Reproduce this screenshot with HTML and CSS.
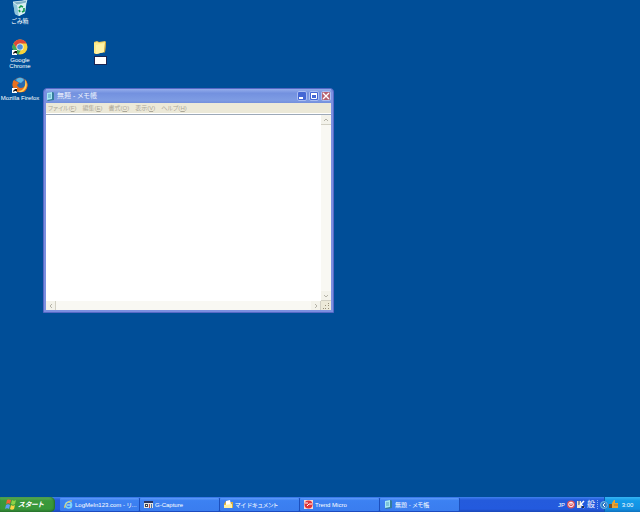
FILE: index.html
```html
<!DOCTYPE html>
<html lang="ja">
  <head>
    <meta charset="UTF-8">
    <meta name="viewport" content="width=device-width, initial-scale=1">
    <title>デスクトップ</title>
    <link rel="stylesheet" href="styles.css">
  </head>
  <body>
    <main class="desktop">
      <a class="shortcut trash" href="#">
        <svg width="16" height="16" viewBox="0 0 16 16">
          <path d="M1 2 10 1l5-1-2 13-6 3-4-2z" fill="#b9e0ea"/>
          <path d="m1 3 4 2 2 11-4-2z" fill="#8fc6dc"/>
          <path d="m5 4 9-2-1 11-6 3z" fill="#d8eef0"/>
          <path d="m1 2 9-1 5-1-1 3-9 2z" fill="#7fb0c4" stroke="#eefcff" stroke-width=".6"/>
          <path d="m7 8 2-2 2 1M12 8v3l-2 1M8 12l-1-2" fill="none" stroke="#159a50" stroke-width="1.7"/>
        </svg>
        <span>ごみ箱</span>
      </a>
      <a class="shortcut chrome" href="#">
        <svg width="16" height="16" viewBox="0 0 16 16">
          <circle cx="8" cy="8" r="7.5" fill="#f7d33c"/>
          <path d="M1.5 4.2A7.5 7.5 0 0 1 14.7 4.5H8L5 10z" fill="#df4939"/>
          <path d="M1.5 4.2 5 10l4 1-2.5 4.3A7.5 7.5 0 0 1 1.5 4.2z" fill="#3fa958"/>
          <circle cx="8" cy="8" r="3.6" fill="#f5f5ed"/>
          <circle cx="8" cy="8" r="2.8" fill="#4b8fdd"/>
          <path d="M0 11h5v5H0z" fill="#fff"/>
          <path d="M1 15c0-2 1-2 2-2l-1-1h3v3l-1-1c-1 0-2 0-3 1z" fill="#111"/>
        </svg>
        <span>Google<br>Chrome</span>
      </a>
      <a class="shortcut firefox" href="#">
        <svg width="16" height="16" viewBox="0 0 16 16">
          <circle cx="8" cy="8" r="7.5" fill="#e8691c"/>
          <circle cx="8" cy="6.5" r="6" fill="#2569b0"/>
          <path d="M4 3c2-3 6-3 8 0l-3 3-3-1z" fill="#5cb8e6"/>
          <path d="M1 4c1-1 1-1 2 0 2 0 3 1 4 2L5 8c1 3 4 4 7 2 2-2 2-5 1-8 4 4 3 10-1 13H5C1 13 0 8 1 4z" fill="#e9701f"/>
          <path d="M13 3c3 4 2 9-3 12-2 0-3 0-4-1 6 0 8-5 7-11z" fill="#ffd45a"/>
          <path d="M0 11h5v5H0z" fill="#fff"/>
          <path d="M1 15c0-2 1-2 2-2l-1-1h3v3l-1-1c-1 0-2 0-3 1z" fill="#111"/>
        </svg>
        <span>Mozilla Firefox</span>
      </a>
      <div class="shortcut folder">
        <svg width="14" height="14" viewBox="0 0 14 14">
          <path d="m1 2 3-1 2 1 6-1 1 1-1 10-9 2-2-1z" fill="#e8c75a"/>
          <path d="m1 3 3-1 2 1 6-1-1 10-8 2-2-1z" fill="#fdeb8c"/>
          <path d="m3 5 9-2-1 9-8 2z" fill="#fff3a6"/>
          <path d="m12 2 1 1-1 9-1 1z" fill="#c9a23c"/>
        </svg>
        <input class="rename" type="text" aria-label="フォルダ名">
      </div>

      <section class="window">
        <header class="title-bar">
          <svg width="9" height="9" viewBox="0 0 9 9">
            <path d="m2 1 5-1 1 1v7l-6 1-1-1z" fill="#347d9b"/>
            <path d="m1 1 5-1v7l-5 1z" fill="#a6e8f3"/>
            <path d="M2 3h3M2 5h3" stroke="#559fc2"/>
          </svg>
          <h1>無題 - メモ帳</h1>
          <button class="caption" aria-label="最小化"><svg width="8" height="8" viewBox="0 0 8 8"><path d="M1 6h4" stroke="#fff" stroke-width="2"/></svg></button>
          <button class="caption" aria-label="最大化"><svg width="8" height="8" viewBox="0 0 8 8"><path d="M1.5 2v4.5h5V2" fill="none" stroke="#fff"/><path d="M1 2h6" stroke="#fff" stroke-width="2"/></svg></button>
          <button class="caption close" aria-label="閉じる"><svg width="8" height="8" viewBox="0 0 8 8"><path d="m1 1 6 6M7 1 1 7" stroke="#fff" stroke-width="1.4"/></svg></button>
        </header>
        <nav class="menu">
          <button>ファイル(<u>F</u>)</button>
          <button>編集(<u>E</u>)</button>
          <button>書式(<u>O</u>)</button>
          <button>表示(<u>V</u>)</button>
          <button>ヘルプ(<u>H</u>)</button>
        </nav>
        <div class="editor">
          <textarea aria-label="本文" spellcheck="false"></textarea>
          <div class="scroll vertical">
            <button aria-label="上へ"><svg width="8" height="8" viewBox="0 0 8 8"><path d="m2 5 2-2 2 2"/></svg></button>
            <button aria-label="下へ"><svg width="8" height="8" viewBox="0 0 8 8"><path d="m2 3 2 2 2-2"/></svg></button>
          </div>
          <div class="scroll horizontal">
            <button aria-label="左へ"><svg width="8" height="8" viewBox="0 0 8 8"><path d="M5 2 3 4l2 2"/></svg></button>
            <button aria-label="右へ"><svg width="8" height="8" viewBox="0 0 8 8"><path d="m3 2 2 2-2 2"/></svg></button>
          </div>
          <svg class="grip" width="10" height="9" viewBox="0 0 10 9">
            <path d="M7 2h1v1H7zM4 4h1v1H4zM7 4h1v1H7zM2 7h1v1H2zM4 7h1v1H4zM7 7h1v1H7z" fill="#99917c"/>
          </svg>
        </div>
      </section>
    </main>

    <footer class="taskbar">
      <button class="start">
        <svg width="12" height="11" viewBox="0 0 12 11">
          <path d="M2 1c2-1 3 0 4 0L5 5C4 4 3 4 1 5z" fill="#f26435"/>
          <path d="M7 1c1 1 3 1 4 0l-1 4c-1 1-3 1-4 0z" fill="#8bd447"/>
          <path d="M1 6c1-1 3-1 4 0l-1 4c-1-1-3-1-4 0z" fill="#5e9cf5"/>
          <path d="M6 6c1 1 3 1 4 0l-1 4c-1 1-3 1-4 0z" fill="#fbd542"/>
        </svg>
        スタート
      </button>
      <div class="tasks">
        <button class="task">
          <svg width="9" height="9" viewBox="0 0 9 9"><circle cx="4.5" cy="5" r="3" fill="none" stroke="#78d4fb" stroke-width="1.7"/><path d="M3 5h4" stroke="#c4f1ff"/><path d="M1 8C-1 6 5 0 8 1" fill="none" stroke="#ffd14f"/></svg>
          <span>LogMeIn123.com - リ...</span>
        </button>
        <button class="task">
          <svg width="9" height="9" viewBox="0 0 9 9"><path d="M0 1h9v7H0z" fill="#e6e6df"/><path d="M0 1h9v2H0z" fill="#273463"/><path d="M1 4h3v3H1z" fill="#3c4250"/><path d="M5 4h1v4H5z" fill="#b94f4e"/><path d="M7 4h1v4H7z" fill="#4970a8"/><path d="M2 5h1v1H2z" fill="#fff"/></svg>
          <span>G-Capture</span>
        </button>
        <button class="task">
          <svg width="9" height="9" viewBox="0 0 9 9"><path d="M0 4 2 1h2l1 1h4v6H0z" fill="#d9ae43"/><path d="m2 1 4-1 1 5-5 1z" fill="#fff"/><path d="m0 5 8-1v4H0z" fill="#fff1a4"/></svg>
          <span>マイ ドキュメント</span>
        </button>
        <button class="task">
          <svg width="9" height="9" viewBox="0 0 9 9"><path d="M0 0h9v9H0z" fill="#f6d8d5"/><circle cx="4.5" cy="4.5" r="4" fill="#df343b"/><path d="M1 3h3M5 4h3M3 6l2-2" stroke="#fff"/></svg>
          <span>Trend Micro</span>
        </button>
        <button class="task">
          <svg width="9" height="9" viewBox="0 0 9 9"><path d="m2 1 5-1 1 1v7l-6 1-1-1z" fill="#347d9b"/><path d="m1 1 5-1v7l-5 1z" fill="#a6e8f3"/><path d="M2 3h3M2 5h3" stroke="#559fc2"/></svg>
          <span>無題 - メモ帳</span>
        </button>
      </div>
      <div class="language">
        <span>JP</span>
        <svg width="8" height="9" viewBox="0 0 8 9"><circle cx="4" cy="4.5" r="4" fill="#d9525f"/><circle cx="4" cy="4.5" r="2.3" fill="none" stroke="#fff"/><path d="M4 2v3" stroke="#fff"/></svg>
        <svg width="8" height="9" viewBox="0 0 8 9"><path d="M0 1h4v7H0z" fill="#e9e6d5"/><path d="M1 2h2M1 4h2" stroke="#303b68"/><path d="m3 5 4-4M4 4l3 4" stroke="#fff" stroke-width="1.5"/><path d="M5 6h2v2H5z" fill="#282f4e"/></svg>
        <span class="ime">般</span>
        <i class="dots"></i>
      </div>
      <div class="tray">
        <button class="expand" aria-label="隠れているアイコンを表示"><svg width="8" height="8" viewBox="0 0 8 8"><circle cx="4" cy="4" r="4" fill="#2b78c7"/><circle cx="4" cy="4" r="3.4" fill="none" stroke="#76b9e4"/><path d="M5 2 3 4l2 2" fill="none" stroke="#fff"/></svg></button>
        <svg width="9" height="9" viewBox="0 0 9 9"><path d="M0 4h3v4H0z" fill="#75502d"/><path d="M3 3 5 0h1v3h3v5H3z" fill="#e9a331"/><path d="M5 5h4" stroke="#b97a26"/></svg>
        <time>3:00</time>
      </div>
    </footer>
  </body>
</html>
```
FILE: styles.css
```css
* {
  box-sizing: border-box;
}

body {
  margin: 0;
  height: 100vh;
  display: flex;
  flex-direction: column;
  overflow: hidden;
  background: #004e98;
  font-family: "Liberation Sans", "Noto Sans CJK JP", sans-serif;
  font-size: 6px;
  line-height: 6px;
  font-feature-settings: "palt";
}

button {
  margin: 0;
  padding: 0;
  border: 0;
  background: none;
  font: inherit;
  color: inherit;
}

svg {
  display: block;
  flex: none;
}

.desktop {
  position: relative;
  flex: 1;
}

/* icons and windows sit freely on the desktop */
.shortcut {
  position: absolute;
  width: 40px;
  display: flex;
  flex-direction: column;
  align-items: center;
  gap: 2px;
  color: #fff;
  text-align: center;
  text-decoration: none;
  white-space: nowrap;
}

.trash {
  left: 0;
  top: 0;
}

.chrome {
  left: 0;
  top: 39px;
}

.firefox {
  left: 0;
  top: 77px;
}

.folder {
  left: 80px;
  top: 40px;
}

.rename {
  width: 13px;
  height: 9px;
  padding: 0;
  border: 1px solid #1c2452;
  background: #fff;
  font: inherit;
}

.window {
  position: absolute;
  left: 43px;
  top: 88px;
  width: 291px;
  height: 225px;
  display: flex;
  flex-direction: column;
  padding: 0 2px 2px;
  border: 1px solid #5668c6;
  border-radius: 4px 4px 0 0;
  background: #7b8fe0;
}

.title-bar {
  height: 14px;
  display: flex;
  align-items: center;
  gap: 2px;
  background: linear-gradient(#94aceb, #7391df 30%, #7e9ce4 80%, #748fdc);
  color: #eef3fd;
}

.title-bar h1 {
  flex: 1;
  margin: 0;
  font-size: 7px;
  line-height: 8px;
  font-weight: 400;
}

.caption {
  width: 10px;
  height: 10px;
  display: grid;
  place-items: center;
  border: 1px solid #a9bdf2;
  border-radius: 2px;
  background: #4467d4;
}

.close {
  background: #b5606f;
}

.menu {
  height: 11px;
  display: flex;
  align-items: center;
  gap: 6px;
  padding: 0 2px;
  background: #ece9d8;
  border-bottom: 1px solid #fff;
  color: #aca899;
}

.editor {
  flex: 1;
  display: grid;
  grid-template-columns: 1fr 10px;
  grid-template-rows: 1fr 9px;
  border-top: 1px solid #9da9b8;
  background: #f5f4ed;
}

.editor textarea {
  width: 100%;
  height: 100%;
  padding: 1px;
  border: 0;
  background: #fff;
  resize: none;
  font: inherit;
}

.scroll {
  display: flex;
  justify-content: space-between;
  background: #f9f8f3;
}

.scroll button {
  background: #f3f2ea;
  display: grid;
  place-items: center;
}

.scroll path {
  fill: none;
  stroke: #b5b3a8;
}

.vertical {
  flex-direction: column;
}

.vertical button {
  height: 10px;
  border-bottom: 1px solid #d2d0c4;
}

.horizontal button {
  width: 10px;
  border-right: 1px solid #d2d0c4;
}

.grip {
  background: #ece9d8;
}

.taskbar {
  height: 15px;
  display: flex;
  background: linear-gradient(#3f80ee, #245bdc 20%, #235ade 80%, #1b48b8);
  color: #fff;
}

.start {
  width: 55px;
  display: flex;
  align-items: center;
  gap: 1px;
  padding-left: 5px;
  border-radius: 0 5px 5px 0;
  background: linear-gradient(#60b15e, #3b983b 25%, #389739 80%, #2c762e);
  box-shadow: inset -1px 0 2px #236b2a;
  font-size: 7px;
  font-style: italic;
  font-weight: 700;
  white-space: nowrap;
}

.tasks {
  flex: 1;
  display: flex;
  gap: 1px;
  padding-left: 5px;
}

.task {
  flex: 0 1 79px;
  min-width: 0;
  height: 13px;
  align-self: center;
  display: flex;
  align-items: center;
  gap: 2px;
  padding-left: 4px;
  border-radius: 1px;
  background: linear-gradient(#5f9cf8, #3c81f2 20%, #3a7def);
  box-shadow: 1px 0 #1c4fbd;
  white-space: nowrap;
}

.language {
  display: flex;
  align-items: center;
  gap: 2px;
  padding-right: 6px;
}

.ime {
  font-size: 8px;
  line-height: 9px;
}

.dots {
  height: 9px;
  border-left: 1px dotted #8caef1;
}

.tray {
  width: 36px;
  display: flex;
  align-items: center;
  gap: 1px;
  background: linear-gradient(#36b4f2, #139be9 25%, #1290e2 80%, #0e70bd);
  box-shadow: inset 1px 0 #0b5ca8;
}

.expand {
  margin-left: -4px;
}

.tray time {
  flex: 1;
  padding-right: 4px;
  text-align: center;
}
```
